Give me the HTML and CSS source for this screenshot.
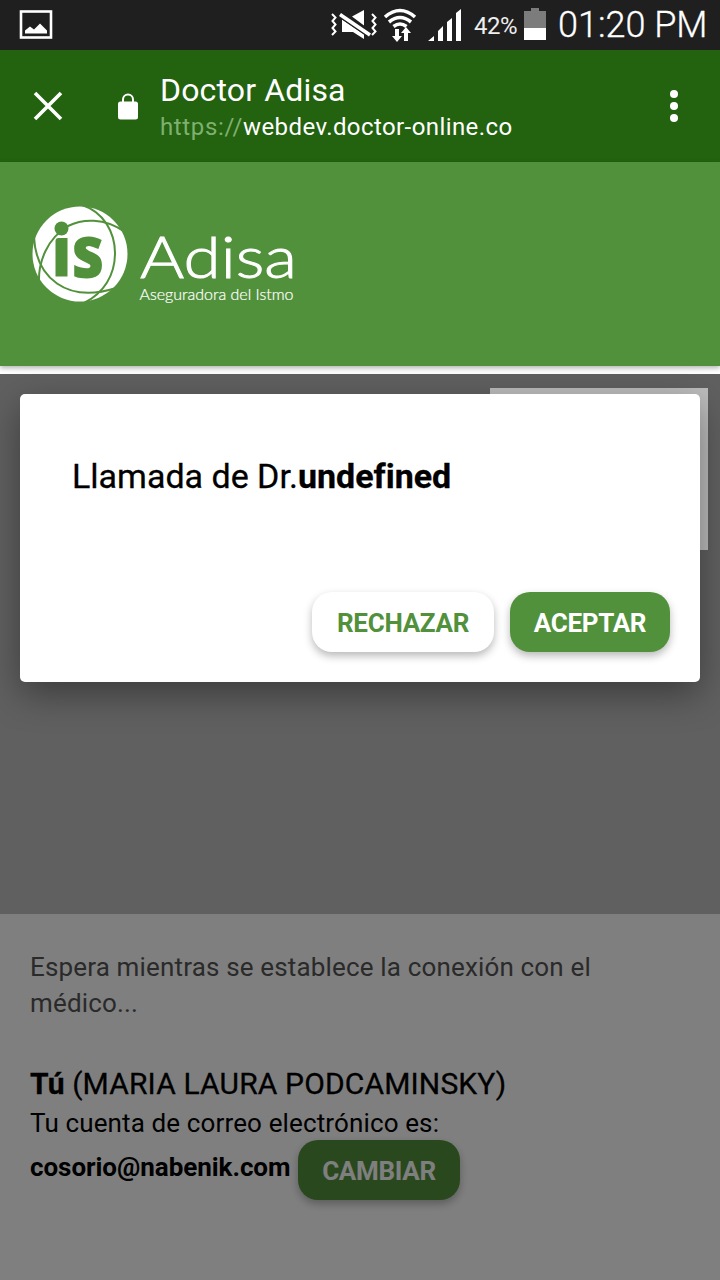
FILE: index.html
```
<!DOCTYPE html>
<html lang="es">
<head>
    <meta charset="UTF-8">
    <title>Doctor Adisa</title>
    <link rel="stylesheet" href="styles.css">
</head>
<body>
    <div class="status-bar">
        <svg class="picture-icon" width="34" height="30" viewBox="0 0 34 30">
            <rect x="2" y="1.500" width="30" height="26" fill="none" stroke="#fff" stroke-width="2.600"/>
            <path d="M6 23.500v-3l5-4 4 3 6-6 7 7v3z" fill="#fff"/>
        </svg>
        <svg class="status-icons" width="142" height="50" viewBox="0 0 142 50">
            <g fill="none" stroke="#fff" stroke-width="2">
                <path d="M12 14l3.500 3.500-3 3.500 3 3.500-3 3.500 3 3.500-3.500 3.500"/>
                <path d="M52 14l3.500 3.500-3 3.500 3 3.500-3 3.500 3 3.500-3.500 3.500"/>
            </g>
            <path d="M32 16.500L44 10v15.500zM22 19.500L44 34.500V39l-11-7H22z" fill="#fff"/>
            <path d="M20 14.500l30 20.500" stroke="#1f1f1f" stroke-width="6"/>
            <path d="M20 14.500l30 20.500" stroke="#fff" stroke-width="3.600"/>
            <g fill="none" stroke="#fff" stroke-width="3.6">
                <path d="M65 17q15-13 30 0"/>
                <path d="M69 22q11-9 22 0"/>
                <path d="M73.500 26.500q6.500-5 13 0"/>
            </g>
            <path d="M75 29h4v7h3l-5 6-5-6h3zM86 27l5 6h-3v8h-4v-8h-3z" fill="#fff"/>
            <path d="M108 41l6-5v5zM118 31l5-5v15h-5zM127 22l5-4v23h-5zM136 13l5-4v32h-5z" fill="#fff"/>
        </svg>
        <span class="battery-text">42%</span>
        <svg class="battery-icon" width="22" height="32" viewBox="0 0 22 32">
            <path d="M7 0h8v3h7v17H0V3h7z" fill="#7c7c7c"/>
            <rect y="20" width="22" height="12" fill="#fff"/>
        </svg>
        <span class="clock">01:20 PM</span>
    </div>

    <div class="toolbar">
        <svg class="close-icon" width="30" height="30" viewBox="0 0 30 30">
            <path d="M2 2l26 26M28 2L2 28" stroke="#fff" stroke-width="3.6"/>
        </svg>
        <svg class="lock-icon" width="20" height="27" viewBox="0 0 20 27">
            <path d="M5 10V6.500a5 5 0 0 1 10 0V10" fill="none" stroke="#fff" stroke-width="2"/>
            <rect y="8.500" width="20" height="18" rx="2.500" fill="#fff"/>
        </svg>
        <div class="page-info">
            <div class="page-title">Doctor Adisa</div>
            <div class="page-url"><span class="scheme">https://</span>webdev.doctor-online.co</div>
        </div>
        <svg class="menu-icon" width="8" height="34" viewBox="0 0 8 34">
            <circle cx="4" cy="5" r="4" fill="#fff"/>
            <circle cx="4" cy="17" r="4" fill="#fff"/>
            <circle cx="4" cy="29" r="4" fill="#fff"/>
        </svg>
    </div>

    <div class="brand">
        <svg class="logo" width="270" height="100" viewBox="0 0 270 100">
            <circle cx="48" cy="49" r="47.500" fill="#fff"/>
            <g fill="none" stroke="#52913b" stroke-width="2">
                <path d="M50 0C72 7 83 28 83 48C83 70 72 88 52 98"/>
                <path d="M93 27C72 12 50 14 36 21C16 33 6 56 7 78"/>
                <path d="M2 32C4 72 34 99 84 83"/>
            </g>
            <circle cx="29.500" cy="23.500" r="7" fill="#52913b"/>
            <path d="M23.500 36q0-3 3-3h9v38.500h-12z" fill="#52913b"/>
            <text class="logo-mark" x="39.500" y="72.500" textLength="33" lengthAdjust="spacingAndGlyphs">s</text>
            <text class="logo-name" x="108" y="73" textLength="157" lengthAdjust="spacingAndGlyphs">Adisa</text>
            <text class="logo-tagline" x="107.500" y="95" textLength="154" lengthAdjust="spacingAndGlyphs">Aseguradora del Istmo</text>
        </svg>
    </div>

    <div class="call">
        <div class="video"></div>
        <div class="info">
            <p class="waiting">Espera mientras se establece la conexión con el médico...</p>
            <div class="user"><b>Tú</b> (MARIA LAURA PODCAMINSKY)</div>
            <div class="account">Tu cuenta de correo electrónico es:</div>
            <div class="email-row">
                <span class="email">cosorio@nabenik.com</span>
                <button class="btn btn-primary btn-change">CAMBIAR</button>
            </div>
        </div>

        <div class="backdrop"></div>
        <div class="preview"></div>
        <div class="modal">
            <div class="modal-title">Llamada de Dr.<b>undefined</b></div>
            <div class="modal-actions">
                <button class="btn btn-reject">RECHAZAR</button>
                <button class="btn btn-primary btn-accept">ACEPTAR</button>
            </div>
        </div>
    </div>
</body>
</html>
```
FILE: styles.css
```
body {
    margin: 0;
    height: 1280px;
    display: flex;
    flex-direction: column;
    overflow: hidden;
    background-color: #fff;
    font-family: Roboto, sans-serif;
    color: #000;
}

svg {
    display: block;
    flex-shrink: 0;
    overflow: visible;
}

/* Android status bar */
.status-bar {
    display: flex;
    align-items: center;
    height: 50px;
    box-sizing: border-box;
    padding-left: 19px;
    background-color: #1f1f1f;
    color: #fff;
    white-space: nowrap;
}

.status-icons {
    margin-left: 267px;
}

.battery-text {
    width: 43px;
    margin-left: 12px;
    padding-top: 2px;
    font-size: 24px;
    letter-spacing: -0.5px;
    color: #eee;
}

.battery-icon {
    margin-left: 7px;
    margin-top: -2px;
}

.clock {
    margin-left: 12px;
    font-size: 36px;
    font-weight: 300;
    -webkit-text-stroke: 0.3px #fff;
}

/* Browser toolbar */
.toolbar {
    display: flex;
    align-items: center;
    height: 112px;
    padding: 0 42px 0 33px;
    background-color: #23620f;
    color: #fff;
}

.lock-icon {
    margin-left: 55px;
}

.page-info {
    flex: 1;
    margin-left: 22px;
    padding-top: 5px;
    white-space: nowrap;
}

.page-title {
    font-size: 32px;
    line-height: 37px;
    letter-spacing: 0.15px;
}

.page-url {
    font-size: 24px;
    line-height: 36px;
    letter-spacing: 0.41px;
}

.scheme {
    color: #7fb070;
    letter-spacing: 0.65px;
}

/* Green header with the logo */
.brand {
    height: 204px;
    box-sizing: border-box;
    padding: 43px 0 0 32px;
    background-color: #52913b;
    box-shadow: 0 2px 5px rgba(0, 0, 0, 0.3);
}

.logo-mark {
    font-family: "Open Sans", sans-serif;
    font-size: 74px;
    font-weight: 800;
    fill: #52913b;
}

.logo-name {
    font-family: Lato, sans-serif;
    font-size: 57px;
    font-weight: 300;
    fill: #fff;
    stroke: #fff;
    stroke-width: 0.9px;
}

.logo-tagline {
    font-family: Lato, sans-serif;
    font-size: 15px;
    font-weight: 300;
    fill: #fff;
    stroke: #fff;
    stroke-width: 0.2px;
}

/* Call screen */
.call {
    position: relative;
    flex: 1;
    margin-top: 8px;
    background-color: #fff;
}

.video {
    height: 540px;
    background-color: #c0c0c0;
}

.info {
    padding: 35px 30px 0;
    font-size: 26px;
}

.waiting {
    margin: 0 0 43px;
    line-height: 36px;
    letter-spacing: 0.16px;
    color: #555;
}

.user {
    font-size: 30px;
    line-height: 40px;
    letter-spacing: 0.15px;
    -webkit-text-stroke: 0.3px #000;
}

.account {
    padding-top: 2px;
    margin-bottom: -1px;
    line-height: 35px;
    letter-spacing: 0.13px;
}

.email-row {
    display: flex;
    line-height: 54px;
}

.email {
    width: 268px;
    font-weight: 700;
    letter-spacing: -0.05px;
    white-space: nowrap;
}

.backdrop {
    position: absolute;
    inset: 0;
    background-color: rgba(0, 0, 0, 0.5);
}

.preview {
    position: absolute;
    top: 14px;
    right: 12px;
    width: 218px;
    height: 162px;
    background-color: #bcbcbc;
}

.modal {
    position: absolute;
    top: 20px;
    left: 20px;
    right: 20px;
    height: 288px;
    box-sizing: border-box;
    padding: 62px 30px 30px 52px;
    display: flex;
    flex-direction: column;
    justify-content: space-between;
    background-color: #fff;
    border-radius: 5px;
    box-shadow: 0 12px 36px rgba(0, 0, 0, 0.38);
}

.modal-title {
    font-size: 34px;
    line-height: 40px;
    font-variant-ligatures: none;
    -webkit-text-stroke: 0.3px #000;
}

.modal-actions {
    display: flex;
    justify-content: flex-end;
    gap: 16px;
}

.btn {
    height: 60px;
    padding: 2px 0 0;
    border: none;
    border-radius: 20px;
    font-family: inherit;
    font-size: 26px;
    font-weight: 700;
    letter-spacing: -0.3px;
    cursor: pointer;
    box-shadow: 0 4px 8px rgba(0, 0, 0, 0.28);
}

.btn-primary {
    background-color: #52913b;
    color: #fff;
}

.btn-reject {
    width: 182px;
    background-color: #fff;
    color: #52913b;
}

.btn-accept {
    width: 160px;
}

.btn-change {
    width: 162px;
}
```
